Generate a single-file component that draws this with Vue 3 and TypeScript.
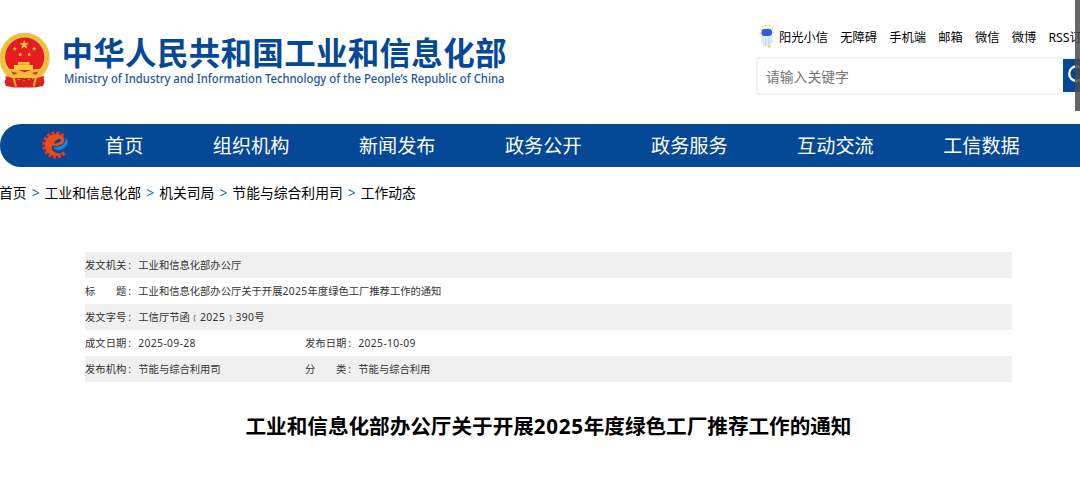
<script setup lang="ts">
interface Field {
  label: string
  value: string
}

const tools: string[] = ['阳光小信', '无障碍', '手机端', '邮箱', '微信', '微博', 'RSS订阅']
const navItems: string[] = ['首页', '组织机构', '新闻发布', '政务公开', '政务服务', '互动交流', '工信数据']
const crumbs: string[] = ['首页', '工业和信息化部', '机关司局', '节能与综合利用司', '工作动态']
const title = '工业和信息化部办公厅关于开展2025年度绿色工厂推荐工作的通知'
const rows: Field[][] = [
  [{ label: '发文机关:', value: '工业和信息化部办公厅' }],
  [{ label: '标题:', value: title }],
  [{ label: '发文字号:', value: '工信厅节函﹝2025﹞390号' }],
  [
    { label: '成文日期:', value: '2025-09-28' },
    { label: '发布日期:', value: '2025-10-09' },
  ],
  [
    { label: '发布机构:', value: '节能与综合利用司' },
    { label: '分类:', value: '节能与综合利用' },
  ],
]
const labelChars = (label: string): string[] => label.slice(0, -1).split('')
// Splits a text into runs so that digit runs can be spaced on their own.
const runs = (text: string): string[] => text.split(/([\d-]+)/).filter(Boolean)
const isDigits = (run: string): boolean => /^[\d-]+$/.test(run)
const teeth: number[] = Array.from({ length: 12 }, (_, i) => 140 + i * 23)
</script>

<template>
  <div class="page">
    <header class="header">
      <svg class="brand" width="520" height="80" viewBox="0 20 520 80">
        <g>
          <path d="M9 73 L4.500 82 L6 86 L14 87.500 H35 L43 86 L44.500 82 L40 73Z" fill="#dc1f1d" />
          <path d="M24.700 32.700A25 25 0 0 1 49.700 57.500C49.700 67 45 74 40 78L9 78C4 74-.3 67-.3 57.500A25 25 0 0 1 24.700 32.700Z" fill="#f3c443" />
          <circle cx="24.700" cy="57.500" r="22.700" fill="none" stroke="#e9aa28" stroke-width="1" stroke-dasharray="3 2" />
          <circle cx="24.700" cy="57" r="19.600" fill="#e51d20" />
          <path d="M24.300 40l1.200 3.200h3.500l-2.800 2.100 1.100 3.400-3-2-3 2 1.100-3.400-2.800-2.100h3.500z" fill="#fbd246" />
          <g fill="#fbca3b">
            <path d="M14.800 46.600l.6 1.500h1.600l-1.300 1 .5 1.600-1.400-.9-1.400.9.5-1.600-1.300-1h1.600z" />
            <path d="M34.200 46.600l.6 1.500h1.600l-1.300 1 .5 1.600-1.400-.9-1.400.9.5-1.600-1.300-1h1.600z" />
            <path d="M20.200 52.200l.6 1.500h1.600l-1.300 1 .5 1.600-1.400-.9-1.400.9.5-1.600-1.300-1h1.600z" />
            <path d="M29.200 52.200l.6 1.500h1.600l-1.300 1 .5 1.600-1.400-.9-1.400.9.5-1.600-1.300-1h1.600z" />
            <path d="M18 62h11.500v3H33v5H14v-5h4z" />
          </g>
          <path d="M18.500 64.200h11" stroke="#d98a22" stroke-width=".8" />
          <path d="M7 69c6-1 12 1 17.700 3.200C30.500 70 37 68 42.500 69l-3 8-10.500-1-4.300 2.500-4.300-2.500-9.500 1z" fill="#f4bd3c" />
          <path d="M11 71.500l7 1.500-4.500 2zM38.500 71.500l-7 1.500 4.500 2z" fill="#e22c20" />
          <path d="M5.500 76l7 2-1 6.500-5.500-1.500zM44 76l-7 2 1 6.500 5.500-1.500z" fill="#da2520" />
          <path d="M13.500 78l2.500 8.500M36 78l-2.500 8.500" stroke="#efad36" stroke-width="2" fill="none" />
          <path d="M18.500 82.500q6.200-6 12.400 0" stroke="#b91b1b" fill="none" />
        </g>
        <text class="brand-cn" x="61.500" y="64.500" textLength="445" lengthAdjust="spacing">中华人民共和国工业和信息化部</text>
        <text class="brand-en" x="64" y="82.500" textLength="440.500" lengthAdjust="spacingAndGlyphs">Ministry of Industry and Information Technology of the People’s Republic of China</text>
      </svg>

      <div class="side">
        <div class="tools">
          <svg class="mascot" width="18" height="24" viewBox="0 0 18 24">
            <circle cx="8.700" cy="7" r="6.600" fill="none" stroke="#f8cf45" stroke-width="1.600" stroke-dasharray="1.500 2.200" />
            <path d="M4.500 10h9l2 7-2 .5-.7 3.500H5.500l-1-3-2 .2z" fill="#dceaf6" />
            <path d="M7.500 13v7M10.800 13v6" stroke="#b8d2ec" stroke-width=".8" />
            <ellipse cx="9" cy="7.500" rx="6" ry="4.800" fill="#dce8f8" />
            <rect x="3.500" y="4" width="10.500" height="7" rx="3.200" fill="#315bd0" />
            <circle cx="7.500" cy="20.500" r="1" fill="#f7d67e" />
            <circle cx="11.300" cy="21.500" r="1.200" fill="#f8c856" />
          </svg>
          <a v-for="tool in tools" :key="tool" class="tool">{{ tool }}</a>
        </div>
        <div class="search">
          <span class="placeholder">请输入关键字</span>
          <span class="search-btn">
            <svg width="33" height="33" viewBox="0 0 33 33" fill="none" stroke="#fff" stroke-width="2.300">
              <circle cx="13.500" cy="14.700" r="7.300" />
              <path d="M19 20l6 6" />
            </svg>
          </span>
        </div>
      </div>
    </header>

    <nav class="nav">
      <svg class="nav-logo" width="28" height="28" viewBox="0 0 28 28">
        <g fill="#e2371f">
          <rect v-for="a in teeth" :key="a" x="12.200" y=".4" width="3.200" height="4" :transform="`rotate(${a} 13.800 14)`" />
        </g>
        <path d="M20.500 5.600A10.800 10.800 0 1 0 21.500 21.500C17 23.500 11 22 10 18C9.500 16.500 9.800 15.500 10.500 14.600C16 16 22 13.500 22.400 9.500C22.600 7.500 21.700 6.200 20.500 5.600ZM12 12.500C13.200 9.500 16 7.400 18.200 7.900C20 8.600 18.500 12.500 12 12.500Z" fill="#ee4b1c" />
        <path d="M12 15.500C18 16.500 24 13.500 23.700 6.500C28.500 11 25 18.500 17.500 19.500C14.500 19.800 12.200 18.600 11.600 17.300C11.400 16.600 11.500 16 12 15.500Z" fill="#1878bd" />
        <path d="M14 17.300Q22 17.300 25 10" fill="none" stroke="#3d9bd6" stroke-width=".9" />
      </svg>
      <a v-for="item in navItems" :key="item" class="nav-item">{{ item }}</a>
    </nav>

    <div class="crumbs">
      <template v-for="(crumb, i) in crumbs" :key="crumb">
        <span v-if="i > 0" class="sep">&gt;</span>
        <a>{{ crumb }}</a>
      </template>
    </div>

    <main>
      <div class="meta">
        <div v-for="(row, i) in rows" :key="i" class="meta-row">
          <div v-for="field in row" :key="field.label" class="field">
            <span class="label">
              <span class="label-text"><i v-for="ch in labelChars(field.label)" :key="ch">{{ ch }}</i></span>:
            </span>
            <span><span v-for="(run, k) in runs(field.value)" :key="k" :class="{ digits: isDigits(run) }">{{ run }}</span></span>
          </div>
        </div>
      </div>
      <h1><span v-for="(run, k) in runs(title)" :key="k" :class="{ digits: isDigits(run) }">{{ run }}</span></h1>
    </main>
    <div class="scroll-thumb"></div>
  </div>
</template>

<style>
body {
  margin: 0;
  background: #fff;
  overflow: hidden;
}
</style>

<style scoped>
.page {
  position: relative;
  width: 1080px;
  height: 484px;
  overflow: hidden;
  color: #000;
  font-family: 'Noto Sans', 'Noto Sans CJK SC', sans-serif;
  white-space: nowrap;
}
.header {
  display: flex;
  height: 124px;
}
.brand {
  display: block;
  flex: none;
  margin-top: 20px;
}
.brand-cn {
  font-family: 'Noto Sans CJK SC', sans-serif;
  font-size: 31.500px;
  font-weight: 700;
  fill: #044896;
}
.brand-en {
  font-size: 12.300px;
  font-weight: 500;
  fill: #1c569f;
}
.side {
  flex: none;
  margin-left: 236px;
}
.tools {
  display: flex;
  align-items: center;
  height: 24px;
  padding: 26px 0 7px 2px;
  font-size: 12.250px;
  line-height: 24px;
}
.mascot {
  flex: none;
  margin: -2px 3px 0 0;
}
.tool {
  margin-right: 12.250px;
}
.search {
  display: flex;
  box-sizing: border-box;
  width: 342px;
  height: 38px;
  border: 2px solid #f3f3f3;
}
.placeholder {
  width: 297px;
  padding-left: 8px;
  font-size: 13.800px;
  line-height: 35px;
  color: #757575;
}
.search-btn {
  width: 33px;
  height: 33px;
  background: #044896;
}
.nav {
  display: flex;
  align-items: center;
  height: 42.500px;
  padding-left: 41.500px;
  border-radius: 21px 0 0 21px;
  background: #044896;
  color: #fff;
  font-size: 19.150px;
}
.nav-logo {
  flex: none;
  margin-right: 35.500px;
}
.nav-item {
  flex: none;
  margin-right: 69.500px;
}
.crumbs {
  display: flex;
  height: 53px;
  margin-left: -1px;
  font-size: 13.800px;
  line-height: 52px;
}
.sep {
  width: 18px;
  text-align: center;
  color: #2368b4;
}
.meta {
  width: 927px;
  margin: 32.500px 0 0 85px;
  font-size: 10.300px;
  color: #333;
}
.meta-row {
  display: flex;
  height: 26.100px;
  line-height: 26.100px;
}
.meta-row:nth-child(odd) {
  background: #f0f0f0;
}
.meta-row:nth-child(n + 4) {
  line-height: 27px;
}
.meta .digits {
  letter-spacing: 0.380px;
}
.field {
  display: flex;
  width: 220px;
}
.label {
  display: flex;
  flex: none;
  width: 53.300px;
}
.label-text {
  display: flex;
  justify-content: space-between;
  width: 41.300px;
  margin-right: 2px;
}
.label-text i {
  font-style: normal;
}
h1 {
  width: 1097px;
  margin: 27.500px 0 0;
  font-size: 20.600px;
  font-weight: 700;
  line-height: 32px;
  text-align: center;
}
h1 .digits {
  letter-spacing: 0.700px;
}
.scroll-thumb {
  position: absolute;
  top: 0;
  right: 0;
  width: 5px;
  height: 111px;
  background: rgba(75, 75, 75, 0.85);
}
</style>
